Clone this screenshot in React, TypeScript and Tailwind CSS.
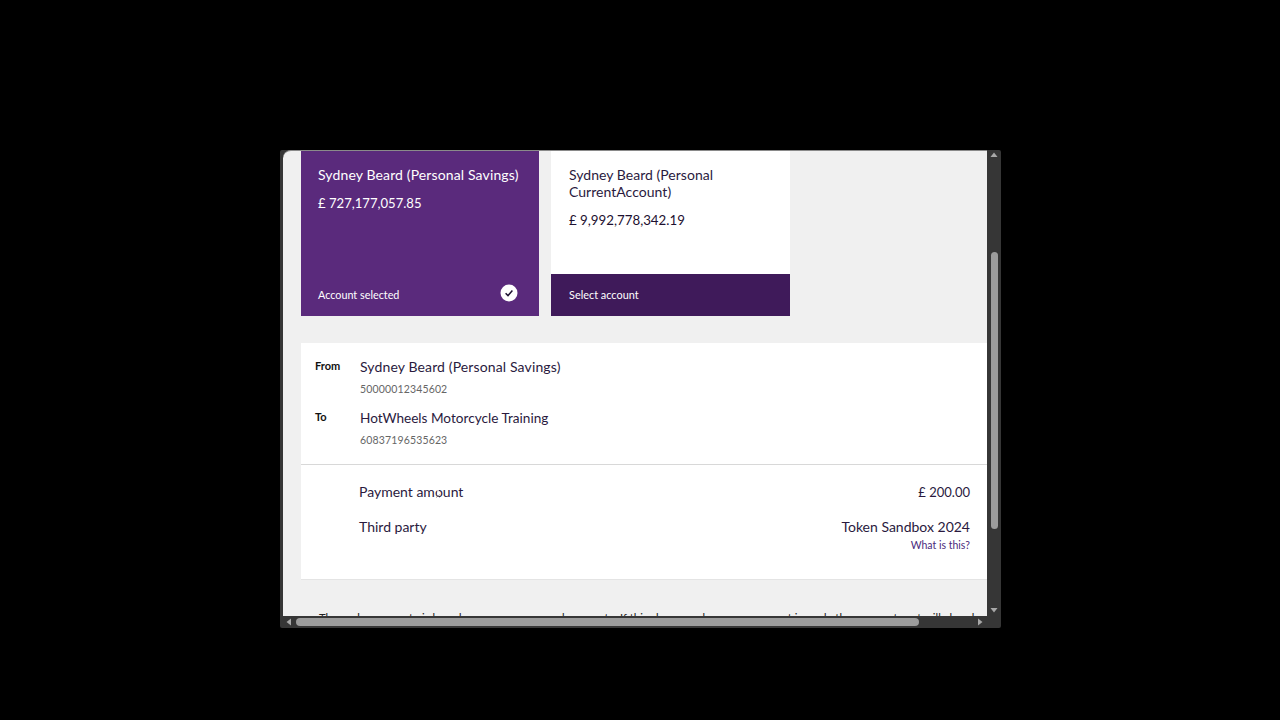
import React from "react";

const font = { fontFamily: '"Lato", "Open Sans", sans-serif' };

function Check() {
  return (
    <svg width="18" height="18" viewBox="0 0 18 18">
      <circle cx="9" cy="9" r="8.5" fill="#fff" />
      <path d="M5.6 9.3 L8 11.6 L12.4 6.6" fill="none" stroke="#1d1030" strokeWidth="1.5" />
    </svg>
  );
}

function Tri({ d }: { d: string }) {
  return (
    <svg width="8" height="8" viewBox="0 0 8 8">
      <path d={d} fill="#a8a8a8" />
    </svg>
  );
}

export default function App() {
  return (
    <div className="h-[720px] w-[1280px] overflow-hidden bg-black pl-[280px] pt-[150px]" style={font}>
      <div className="flex h-[478px] w-[721px] flex-col rounded-[2px] bg-[#363636] pl-[3px]">
        <div className="flex h-[466px] min-h-0">
          <div className="h-full w-[704px] overflow-hidden rounded-tl-[8px] border-t border-[#8a8a8a] bg-[#f0f0f0] pl-[18px] text-[#2a1a3e]">
            <div className="flex gap-[12px]">
              <div className="flex h-[165px] w-[238px] flex-col bg-[#5a2a7c] text-white">
                <div className="flex-1 pl-[17px] pt-[15px]">
                  <div className="text-[14px] leading-[17px] tracking-[0.13px]">Sydney Beard (Personal Savings)</div>
                  <div className="mt-[12px] text-[13.1px] leading-[17px]">£ 727,177,057.85</div>
                </div>
                <div className="flex h-[42px] items-center justify-between pl-[17px] pr-[21px] text-[10.8px]">
                  <span>Account selected</span>
                  <span className="mb-[5px]">
                    <Check />
                  </span>
                </div>
              </div>
              <div className="flex h-[165px] w-[239px] flex-col bg-white">
                <div className="flex-1 pl-[18px] pr-[17px] pt-[15px]">
                  <div className="w-[170px] text-[14px] leading-[17px] tracking-[0.03px]">Sydney Beard (Personal CurrentAccount)</div>
                  <div className="mt-[12px] text-[13.3px] leading-[17px] text-[#1d1030]">£ 9,992,778,342.19</div>
                </div>
                <div className="flex h-[42px] items-center bg-[#3f1a5a] px-[18px] text-[10.9px] text-white">Select account</div>
              </div>
            </div>

            <div className="mt-[27px] bg-white">
              <div className="h-[122px] border-b border-[#d8d8d8] pl-[14px] pt-[14px]">
                <div className="flex">
                  <div className="w-[45px] pt-[1px] text-[11px] font-bold leading-[16px] text-[#111]">From</div>
                  <div>
                    <div className="text-[14px] leading-[20px] tracking-[0.13px]">Sydney Beard (Personal Savings)</div>
                    <div className="mt-[4px] text-[10.5px] leading-[16px] tracking-[0.15px] text-[#666]">50000012345602</div>
                  </div>
                </div>
                <div className="mt-[11px] flex">
                  <div className="w-[45px] pt-[1px] text-[11px] font-bold leading-[16px] text-[#111]">To</div>
                  <div>
                    <div className="text-[13.6px] leading-[20px]">HotWheels Motorcycle Training</div>
                    <div className="mt-[4px] text-[10.5px] leading-[16px] tracking-[0.15px] text-[#666]">60837196535623</div>
                  </div>
                </div>
              </div>
              <div className="h-[115px] border-b border-[#e4e4e4] pl-[58px] pr-[17px] pt-[17px] text-[14px] leading-[20px]">
                <div className="flex justify-between">
                  <span className="relative">
                    Payment amount
                    <svg className="absolute left-[76px] top-[7px]" width="6" height="9" viewBox="0 0 6 9">
                      <path d="M3 0 L3 6" stroke="#ffffff" strokeWidth="1.4" />
                      <path d="M1.2 5.6 L4.8 8.6 M4.8 5.6 L1.2 8.6" stroke="#6f6a76" strokeWidth="0.7" />
                    </svg>
                  </span>
                  <span className="text-[13px]">£ 200.00</span>
                </div>
                <div className="mt-[15px] flex justify-between">
                  <span>Third party</span>
                  <span>Token Sandbox 2024</span>
                </div>
                <div className="mt-[1px] text-right text-[10.5px] leading-[14px] text-[#4a2a7c]">What is this?</div>
              </div>
            </div>

            <div className="mt-[30px] whitespace-nowrap pl-[18px] text-[11.2px] leading-[16px] tracking-[0.05px] text-[#222]">
              The exchange quote is based on our currency exchange rate. If this changes when your payment is made the payment cost will also change
            </div>
          </div>

          <div className="flex w-[14px] flex-col items-center pt-[1px]">
            <Tri d="M4 1.5 L7.5 6 L.5 6 Z" />
            <div className="mt-[93px] h-[277px] w-[7px] rounded-[4px] bg-[#9c9c9c]" />
            <div className="mt-auto pb-[2px] leading-none">
              <Tri d="M.5 2 L7.5 2 L4 6.5 Z" />
            </div>
          </div>
        </div>

        <div className="flex h-[12px] items-center">
          <div className="ml-[2px]">
            <Tri d="M6 .5 L6 7.5 L1.5 4 Z" />
          </div>
          <div className="ml-[3px] h-[8px] w-[623px] rounded-[4px] bg-[#9c9c9c]" />
          <div className="ml-[57px] leading-none">
            <Tri d="M2 .5 L2 7.5 L6.5 4 Z" />
          </div>
        </div>
      </div>
    </div>
  );
}
